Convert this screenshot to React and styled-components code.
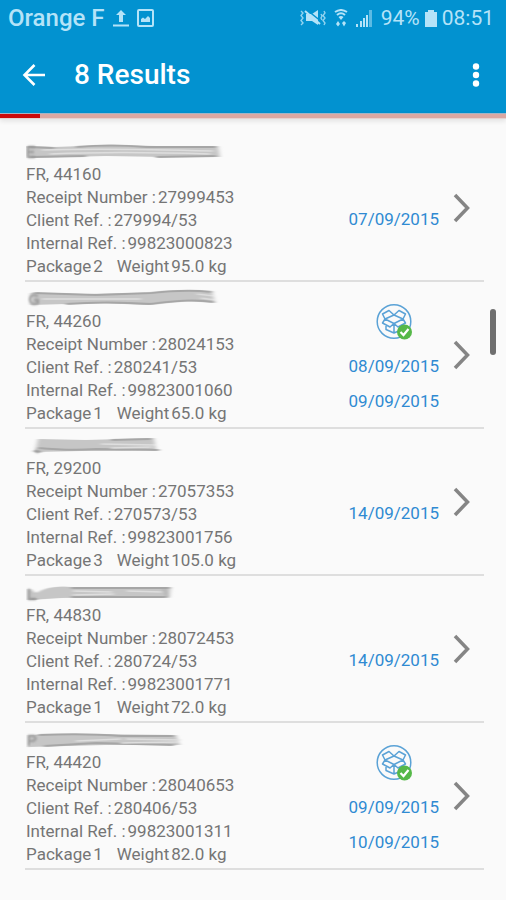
import React, { useId } from "react";
import styled, { createGlobalStyle } from "styled-components";

const GlobalStyle = createGlobalStyle`
  * {
    box-sizing: border-box;
  }
  body {
    margin: 0;
    background-color: #fafafa;
    font-family: Roboto, "Liberation Sans", sans-serif;
  }
`;

const Screen = styled.div`
  position: relative;
  min-height: 100vh;
  background-color: #fafafa;
`;

const Header = styled.header`
  background-color: #0292d0;
`;

const StatusBar = styled.div`
  display: flex;
  align-items: center;
  justify-content: space-between;
  height: 36px;
  padding: 0 12px 0 8px;
  color: #b5e3f8;
`;

const StatusGroup = styled.div`
  display: flex;
  align-items: center;
  gap: ${props => props.$gap || "8px"};
`;

const Carrier = styled.span`
  font-size: 24px;
  font-weight: 500;
  line-height: 36px;
`;

const StatusText = styled.span`
  font-size: 21px;
  line-height: 36px;
`;

const Toolbar = styled.div`
  display: flex;
  align-items: center;
  height: 77px;
  padding: 0 10px 0 14px;
`;

const IconButton = styled.button`
  display: flex;
  align-items: center;
  justify-content: center;
  width: 40px;
  height: 48px;
  padding: 0;
  border: 0;
  background: none;
  color: white;
  cursor: pointer;
`;

const Title = styled.h1`
  flex: 1;
  margin: 0 0 0 20px;
  color: white;
  font-size: 28px;
  font-weight: 500;
  line-height: 36px;
`;

const Progress = styled.div`
  height: 6px;
  background-color: #dba8a2;
  border-top: 1px solid #a3b4c6;
  border-bottom: 1px solid #e6d3d0;
  box-shadow: 0 2px 5px rgba(0, 0, 0, 0.1);
`;

const ProgressBar = styled.div`
  width: 8%;
  height: 4px;
  background-color: #cc0a0a;
`;

const List = styled.ul`
  margin: 0;
  padding: 16px 22px 0 25px;
  list-style: none;
`;

const Row = styled.li`
  display: flex;
  border-bottom: 2px solid #dedede;
`;

const Details = styled.div`
  flex: 1;
  padding: 5px 0 2px 1px;
  color: #757575;
  font-size: 17px;
  line-height: 23px;
`;

const NameLine = styled.div`
  display: flex;
  align-items: center;
  height: 23px;
`;

const Line = styled.div`
  display: flex;
  gap: ${props => props.$gap || "2px"};
  white-space: nowrap;
`;

const Dates = styled.div`
  display: flex;
  flex-direction: column;
  align-items: center;
  padding-top: 21px;
  color: #2f8ad2;
  font-size: 17px;
  line-height: 35px;
`;

const Delivery = styled.div`
  width: 38px;
  height: 38px;
  margin-bottom: 8px;
`;

const OpenButton = styled(IconButton)`
  width: 45px;
  align-self: center;
  color: #858585;
`;

const ScrollThumb = styled.div`
  position: absolute;
  top: 309px;
  right: 10px;
  width: 6px;
  height: 46px;
  border-radius: 3px;
  background-color: #6f6f6f;
`;

const results = [
  {
    city: "FR, 44160",
    receipt: "27999453",
    client: "279994/53",
    internal: "99823000823",
    packages: 2,
    weight: "95.0 kg",
    dates: ["07/09/2015"],
    smudge: {
      body: "M1 6 L28 7 L85 5 L130 6 L192 6 L194 17 L140 17 L80 16 L1 18 Z",
      dark: "M1 7 L28 8 M50 7 Q85 4 120 7 L190 7 M4 17 L60 16 M130 17 L190 16",
      light: "M16 10 Q80 8 187 11 M24 14 Q90 11 184 14",
      letter: "M2 7 V17 M2 7 H9 M2 12 H8 M2 17 H9"
    }
  },
  {
    city: "FR, 44260",
    receipt: "28024153",
    client: "280241/53",
    internal: "99823001060",
    packages: 1,
    weight: "65.0 kg",
    delivered: true,
    dates: ["08/09/2015", "09/09/2015"],
    smudge: {
      body: "M5 6 L60 7 L115 6 L160 4 L186 4 L189 16 L160 14 L120 18 L75 16 L5 18 Z",
      dark: "M8 6 L70 8 L125 6 Q160 2 186 5 M40 17 Q80 14 125 17 Q165 11 188 15",
      light: "M16 12 L115 12 M171 7 L188 9 M175 11 L189 13",
      letter: "M12 9 Q4 6 4 13 Q5 19 12 16 V13 H8"
    }
  },
  {
    city: "FR, 29200",
    receipt: "27057353",
    client: "270573/53",
    internal: "99823001756",
    packages: 3,
    weight: "105.0 kg",
    dates: ["14/09/2015"],
    smudge: {
      body: "M12 5 L60 6 L95 5 L128 4 L130 16 L95 17 L55 17 L9 18 Z",
      dark: "M12 14 Q45 17 70 15 L133 16 M8 17 L15 18 M85 6 L125 5",
      light: "M75 10 L128 11 M85 14 L126 13",
      letter: "M9 17 L13 18"
    }
  },
  {
    city: "FR, 44830",
    receipt: "28072453",
    client: "280724/53",
    internal: "99823001771",
    packages: 1,
    weight: "72.0 kg",
    dates: ["14/09/2015"],
    smudge: {
      body: "M3 7 L10 12 Q24 4 45 6 L145 6 L143 17 L95 16 L35 17 L4 19 Z",
      dark: "M3 8 V18 H11 M45 7 L144 7 M45 16 L140 16 M138 8 L142 16",
      light: "M47 10 L86 11 M47 14 L88 13 M101 10 L136 11",
      letter: "M3 8 V18 H10"
    }
  },
  {
    city: "FR, 44420",
    receipt: "28040653",
    client: "280406/53",
    internal: "99823001311",
    packages: 1,
    weight: "82.0 kg",
    delivered: true,
    dates: ["09/09/2015", "10/09/2015"],
    smudge: {
      body: "M2 7 L60 6 L150 7 L154 17 L80 17 L2 19 Z",
      dark: "M12 7 Q60 5 95 8 L148 8 M18 18 L70 15 L148 17",
      light: "M50 13 L95 11 M100 11 L154 12 M95 15 L152 14",
      letter: "M3 18 V8 H8 Q12 11 7 13 H3"
    }
  }
];

const Smudge = ({ body, dark, light, letter }) => {
  const id = useId();
  return (
    <svg width="200" height="23" viewBox="0 0 200 23" fill="none" aria-hidden="true">
      <filter id={id} x="-5%" y="-20%" width="110%" height="140%">
        <feGaussianBlur stdDeviation="2 0.7" />
      </filter>
      <g filter={`url(#${id})`}>
        <path d={body} fill="#c6c6c6" />
        <path d={dark} stroke="#a6a6a6" strokeWidth="2" />
        <path d={light} stroke="#dedede" strokeWidth="1.5" />
      </g>
      <path d={letter} stroke="#999" strokeWidth="2" style={{ filter: "blur(1px)" }} />
    </svg>
  );
};

const UploadIcon = () => (
  <svg width="18" height="18" viewBox="0 0 18 18" fill="currentColor" aria-hidden="true">
    <path d="M9 1 L14 6 H11 V13 H7 V6 H4 Z M1 15.5 H17 V17.5 H1 Z" />
  </svg>
);

const PictureIcon = () => (
  <svg width="17" height="18" viewBox="0 0 17 18" aria-hidden="true">
    <rect x="1" y="1" width="15" height="16" rx="1" fill="none" stroke="currentColor" strokeWidth="2" />
    <path d="M4 13 V10 L6 8.5 L8 10 L11 7 L13 9 V13 Z" fill="currentColor" />
  </svg>
);

const MuteIcon = () => (
  <svg width="26" height="18" viewBox="0 0 26 18" aria-hidden="true">
    <path d="M6 5 H12 L18 1 V16 L12 12 H6 Z" fill="currentColor" />
    <path d="M7 1 L22 13" stroke="#0292d0" strokeWidth="1.5" />
    <path d="M5 2 L20 15" stroke="currentColor" strokeWidth="2" />
    <path
      d="M1 2 L3 4 L1 6.500 L3 9 L1 11.500 L3 14 L1 16 M21 5 L22 7 L21 9 L22 11 M24 2 L25 4 L23 6.500 L25 9 L23 11.500 L25 14 L24 16"
      fill="none"
      stroke="currentColor"
      strokeWidth="1.4"
      opacity="0.8"
    />
  </svg>
);

const WifiIcon = () => (
  <svg width="14" height="18" viewBox="0 0 14 18" aria-hidden="true">
    <path d="M1 3 Q7 -1 13 3 M3 6 Q7 2.500 11 6" fill="none" stroke="currentColor" strokeWidth="2" />
    <path d="M4.500 8 Q7 6 9.500 8 L7 11 Z M2 15 L4 12 L6 15 L4 17.500 Z M8 14 L10 12 L12 14 L10 17.500 Z" fill="currentColor" />
  </svg>
);

const SignalIcon = () => (
  <svg width="17" height="17" viewBox="0 0 17 17" fill="currentColor" aria-hidden="true">
    <path d="M0 14 H2 V17 H0 Z M4 11 H6 V17 H4 Z M7 8 H9 V17 H7 Z M10 5 H12 V17 H10 Z" />
    <path d="M13 0 H16 V17 H13 Z" opacity="0.5" />
  </svg>
);

const BatteryIcon = () => (
  <svg width="12" height="17" viewBox="0 0 12 17" fill="currentColor" aria-hidden="true">
    <path d="M3 0 H9 V2 H12 V17 H0 V2 H3 Z" />
  </svg>
);

const BackIcon = () => (
  <svg width="24" height="24" viewBox="0 0 24 24" fill="none" stroke="currentColor" strokeWidth="2.6" aria-hidden="true">
    <path d="M12.500 2 L2.500 12 L12.500 22 M2.500 12 H23" />
  </svg>
);

const MoreIcon = () => (
  <svg width="8" height="24" viewBox="0 0 8 24" fill="currentColor" aria-hidden="true">
    <circle cx="4" cy="3.500" r="3.200" />
    <circle cx="4" cy="12" r="3.200" />
    <circle cx="4" cy="20.500" r="3.200" />
  </svg>
);

const ChevronIcon = () => (
  <svg width="18" height="30" viewBox="0 0 18 30" fill="none" stroke="currentColor" strokeWidth="3.500" aria-hidden="true">
    <path d="M2 2 L14.500 15 L2 28" />
  </svg>
);

const BoxIcon = () => (
  <svg width="38" height="38" viewBox="0 0 38 38" fill="none" role="img" aria-label="Delivered">
    <circle cx="19" cy="18.500" r="16.800" stroke="#5aa2d6" strokeWidth="1.500" />
    <path
      d="M19 12 L28 16 L19 20.500 L10 16 Z M19 12 L14 7.500 L7.500 11 L10 16 L7.500 20 L15 24 L19 20.500 L23 24 L30.500 20 L28 16 L30.500 11 L24 7.500 Z M11 23 V26.500 L19 30 L27 26.500 V23 M19 20.500 V30"
      stroke="#5aa2d6"
      strokeWidth="1.500"
      strokeLinejoin="round"
    />
    <circle cx="29.500" cy="29" r="7.500" fill="#55b848" />
    <path d="M25.500 29 L28.500 32 L33.500 26" stroke="white" strokeWidth="2.200" />
  </svg>
);

function Result({ item }) {
  return (
    <Row>
      <Details>
        <NameLine>
          <Smudge {...item.smudge} />
        </NameLine>
        <Line>{item.city}</Line>
        <Line>
          <span>Receipt Number :</span>
          <span>{item.receipt}</span>
        </Line>
        <Line>
          <span>Client Ref. :</span>
          <span>{item.client}</span>
        </Line>
        <Line>
          <span>Internal Ref. :</span>
          <span>{item.internal}</span>
        </Line>
        <Line $gap="14px">
          <Line>
            <span>Package</span>
            <span>{item.packages}</span>
          </Line>
          <Line>
            <span>Weight</span>
            <span>{item.weight}</span>
          </Line>
        </Line>
      </Details>
      <Dates>
        <Delivery>{item.delivered && <BoxIcon />}</Delivery>
        {item.dates.map(date => (
          <time key={date}>{date}</time>
        ))}
      </Dates>
      <OpenButton type="button" aria-label={`Open ${item.receipt}`}>
        <ChevronIcon />
      </OpenButton>
    </Row>
  );
}

function App() {
  return (
    <Screen>
      <GlobalStyle />
      <Header>
        <StatusBar>
          <StatusGroup $gap="7px">
            <Carrier>Orange F</Carrier>
            <UploadIcon />
            <PictureIcon />
          </StatusGroup>
          <StatusGroup>
            <MuteIcon />
            <WifiIcon />
            <SignalIcon />
            <StatusGroup $gap="5px">
              <StatusText>94%</StatusText>
              <BatteryIcon />
              <StatusText>08:51</StatusText>
            </StatusGroup>
          </StatusGroup>
        </StatusBar>
        <Toolbar>
          <IconButton type="button" aria-label="Back">
            <BackIcon />
          </IconButton>
          <Title>8 Results</Title>
          <IconButton type="button" aria-label="More options">
            <MoreIcon />
          </IconButton>
        </Toolbar>
        <Progress>
          <ProgressBar />
        </Progress>
      </Header>
      <List>
        {results.map(item => (
          <Result key={item.receipt} item={item} />
        ))}
      </List>
      <ScrollThumb />
    </Screen>
  );
}

export default App;
